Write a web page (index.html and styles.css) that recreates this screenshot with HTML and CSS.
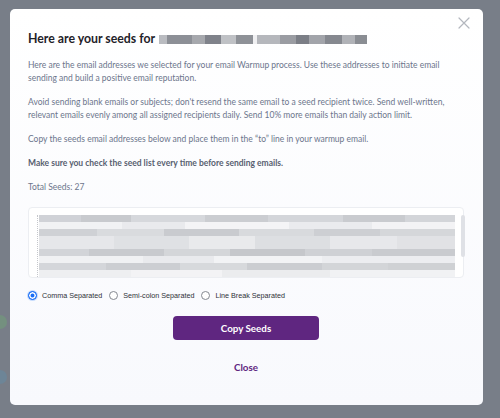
FILE: index.html
```html
<!DOCTYPE html>
<html lang="en">
  <head>
    <meta charset="UTF-8" />
    <meta name="viewport" content="width=device-width, initial-scale=1.0" />
    <title>Warmup Seeds</title>
    <link rel="stylesheet" href="styles.css">
  </head>
  <body>
    <!-- page behind the overlay -->
    <div class="backdrop">
      <span class="blob green"></span>
      <span class="blob blue"></span>
    </div>

    <div class="modal">
      <button class="close-x" aria-label="Close">
        <svg width="12" height="12" viewBox="0 0 12 12">
          <path d="M1 1 L11 11 M11 1 L1 11" stroke="#b3b7be" stroke-width="1.2" fill="none" stroke-linecap="round" />
        </svg>
      </button>

      <h2 class="title">Here are your seeds for <span class="redacted"></span></h2>

      <p class="text">Here are the email addresses we selected for your email Warmup process. Use these addresses to initiate email sending and build a positive email reputation.</p>
      <p class="text">Avoid sending blank emails or subjects; don't resend the same email to a seed recipient twice. Send well-written, relevant emails evenly among all assigned recipients daily. Send 10% more emails than daily action limit.</p>
      <p class="text">Copy the seeds email addresses below and place them in the “to” line in your warmup email.</p>
      <p class="text strong">Make sure you check the seed list every time before sending emails.</p>
      <p class="text">Total Seeds: 27</p>

      <!-- seed list (blurred) -->
      <div class="seed-box">
        <div class="seed-rows">
          <div class="row r1"></div>
          <div class="row r2"></div>
          <div class="row r3"></div>
          <div class="row r4"></div>
          <div class="row r5"></div>
          <div class="row r6"></div>
          <div class="row r7"></div>
          <div class="row r8"></div>
        </div>
        <div class="scrollbar"><span class="thumb"></span></div>
      </div>

      <div class="options">
        <label class="option"><span class="radio checked"></span>Comma Separated</label>
        <label class="option"><span class="radio"></span>Semi-colon Separated</label>
        <label class="option"><span class="radio"></span>Line Break Separated</label>
      </div>

      <div class="actions">
        <button class="btn-copy">Copy Seeds</button>
        <button class="btn-close">Close</button>
      </div>
    </div>
  </body>
</html>
```

FILE: styles.css
```css
body {
  margin: 0;
  width: 500px;
  height: 418px;
  overflow: hidden;
  background-color: #787e88;
  font-family: Lato, "Open Sans", sans-serif;
  position: relative;
}

.backdrop {
  position: absolute;
  inset: 0;
}

.blob {
  position: absolute;
  width: 14px;
  height: 14px;
  border-radius: 50%;
  left: -7px;
}

.blob.green {
  top: 315px;
  background-color: #74907f;
}

.blob.blue {
  top: 370px;
  background-color: #6d8597;
}

.modal {
  position: absolute;
  left: 10px;
  top: 9px;
  width: 473px;
  height: 396px;
  box-sizing: border-box;
  padding: 23px 19px 0 18px;
  background: linear-gradient(#ffffff, #f8f9fd);
  border-radius: 5px;
}

.close-x {
  position: absolute;
  top: 8px;
  right: 13px;
  padding: 0;
  border: none;
  background: none;
  cursor: pointer;
}

.title {
  margin: 0 0 13px;
  font-size: 12.3px;
  font-weight: 700;
  color: #1f2229;
  line-height: 14px;
  display: flex;
  align-items: center;
  gap: 4px;
}

.redacted {
  display: inline-block;
  width: 208px;
  height: 9px;
  background:
    linear-gradient(90deg,
      #b9bbc0 0 4%, #8c8f96 4% 16%, #a6a8ad 16% 22%, #7f828a 22% 30%,
      #bfc1c5 30% 37%, #8e9197 37% 45%, #f0f0f2 45% 47%, #b5b7bc 47% 58%,
      #9a9ca2 58% 66%, #7b7e86 66% 72%, #a2a4aa 72% 80%, #85888f 80% 88%,
      #b0b2b7 88% 94%, #8a8d93 94% 100%);
}

.text {
  margin: 0 0 11px;
  font-size: 8.5px;
  line-height: 13px;
  color: #6c758c;
}

.text.strong {
  font-weight: 700;
  color: #585f70;
}

.seed-box {
  margin-top: 13px;
  height: 71px;
  box-sizing: border-box;
  border: 1px solid #eceef2;
  border-radius: 4px;
  background-color: #ffffff;
  display: flex;
  padding: 7px 2px 0 8px;
}

.seed-rows {
  flex: 1;
  display: flex;
  flex-direction: column;
  border-left: 1px dotted #c4c6cb;
  padding-left: 1px;
}

.row {
  width: 416px;
  height: 7px;
}

.row.r1 {
  background: linear-gradient(90deg, #d0d2d7 0 10%, #c8cace 10% 22%, #d6d8dc 22% 40%, #cbcdd1 40% 55%, #d4d6da 55% 73%, #c9cbcf 73% 88%, #d3d5d9 88% 100%);
}

.row.r2 {
  background: linear-gradient(90deg, #f1f2f4 0 20%, #e9eaed 20% 35%, #f4f4f6 35% 60%, #eaebee 60% 80%, #f3f3f5 80% 100%);
}

.row.r3 {
  background: linear-gradient(90deg, #cfd1d5 0 14%, #d9dbde 14% 30%, #c9cbcf 30% 48%, #d8dadd 48% 66%, #cdcfd3 66% 82%, #d5d7da 82% 100%);
}

.row.r4 {
  height: 14px;
  background: linear-gradient(90deg, #e6e7ea 0 18%, #dfe1e4 18% 36%, #e9eaec 36% 52%, #dddfe2 52% 70%, #e7e8eb 70% 86%, #e1e2e5 86% 100%);
}

.row.r5 {
  background: linear-gradient(90deg, #d2d4d8 0 12%, #c8cace 12% 30%, #d4d6d9 30% 46%, #c5c7cb 46% 64%, #cfd1d5 64% 80%, #c9cbcf 80% 100%);
}

.row.r6 {
  background: linear-gradient(90deg, #f0f1f3 0 25%, #e9eaed 25% 42%, #f2f3f5 42% 68%, #ecedf0 68% 100%);
}

.row.r7 {
  background: linear-gradient(90deg, #d4d6da 0 16%, #ccced2 16% 34%, #d7d9dc 34% 50%, #cbcdd1 50% 68%, #d3d5d8 68% 84%, #cfd1d4 84% 100%);
}

.row.r8 {
  background: linear-gradient(90deg, #eeeff1 0 22%, #f3f3f5 22% 44%, #ebecee 44% 70%, #f1f2f4 70% 100%);
}

.scrollbar {
  width: 5px;
  margin-left: 6px;
}

.thumb {
  display: block;
  width: 4px;
  height: 42px;
  border-radius: 2px;
  background-color: #dfe1e6;
}

.options {
  display: flex;
  align-items: center;
  gap: 7px;
  margin-top: 13px;
}

.option {
  display: flex;
  align-items: center;
  gap: 5px;
  font-family: "Liberation Sans", Arial, sans-serif;
  font-size: 7.2px;
  color: #2e3138;
}

.radio {
  width: 9px;
  height: 9px;
  box-sizing: border-box;
  border-radius: 50%;
  border: 1px solid #858991;
  background-color: #ffffff;
}

.radio.checked {
  border: 1px solid #1a6ef5;
  box-shadow: 0 0 0 1px #c7dcfd, inset 0 0 0 1.5px #ffffff;
  background-color: #1a6ef5;
}

.actions {
  display: flex;
  flex-direction: column;
  align-items: center;
  margin-top: 16px;
}

.btn-copy {
  width: 146px;
  height: 24px;
  border: none;
  border-radius: 4px;
  background-color: #5f2680;
  color: #ffffff;
  font-family: Lato, sans-serif;
  font-size: 9.8px;
  font-weight: 700;
  cursor: pointer;
}

.btn-close {
  margin-top: 20px;
  border: none;
  background: none;
  color: #5f2680;
  font-family: Lato, sans-serif;
  font-size: 9.8px;
  font-weight: 700;
  cursor: pointer;
}
```
